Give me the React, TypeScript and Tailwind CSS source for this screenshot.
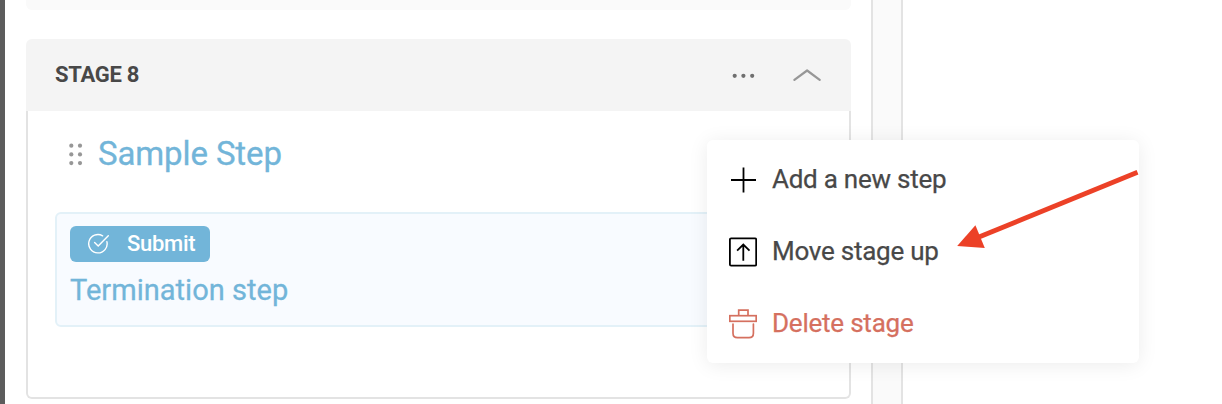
import type { ReactNode } from "react";

type MenuItemProps = {
  icon: ReactNode;
  label: string;
  danger?: boolean;
};

function DotsIcon() {
  return (
    <svg width="24" height="6" viewBox="0 0 24 6" fill="#6f6f6f">
      <circle cx="2.7" cy="2.8" r="2.1" />
      <circle cx="11.4" cy="2.8" r="2.1" />
      <circle cx="20.2" cy="2.8" r="2.1" />
    </svg>
  );
}

function ChevronUpIcon() {
  return (
    <svg width="28" height="14" viewBox="0 0 28 14" fill="none" stroke="#979797" strokeWidth="2.2">
      <path d="M1.4 11.8L14.1 2.5L26.7 11.8" strokeLinecap="round" strokeLinejoin="round" />
    </svg>
  );
}

function DragHandle() {
  return (
    <svg className="mt-0.5" width="14" height="24" viewBox="0 0 14 24" fill="#979797">
      {[2.7, 11.4, 20.1].map((y) => (
        <g key={y}>
          <circle cx="2.3" cy={y} r="2.1" />
          <circle cx="11" cy={y} r="2.1" />
        </g>
      ))}
    </svg>
  );
}

function CheckCircleIcon() {
  return (
    <svg width="22" height="22" viewBox="0 0 22 22" fill="none" stroke="#fff" strokeWidth="1.4" strokeLinecap="round">
      <path d="M14.6 2.8A9.2 9.2 0 1 0 18.9 8.7" />
      <path d="M6.6 9.5L10.2 13L20.3 2.8" />
    </svg>
  );
}

function PlusIcon() {
  return (
    <svg width="28" height="28" viewBox="0 0 28 28" fill="none" stroke="#000" strokeWidth="1.8">
      <path d="M14.5 1.5V26.5M2 14H27" />
    </svg>
  );
}

function MoveUpIcon() {
  return (
    <svg width="28" height="30" viewBox="0 0 28 30" fill="none" stroke="#000" strokeWidth="1.8">
      <rect x="0.9" y="1.4" width="26.3" height="27.2" rx="1.2" />
      <path d="M14.3 23.7V7.6M8.1 13.6L14.3 7.6L20.5 13.6" />
    </svg>
  );
}

function TrashIcon() {
  return (
    <svg width="28" height="30" viewBox="0 0 28 30" fill="none" stroke="#d5705f" strokeWidth="1.7">
      <rect x="0.8" y="6.7" width="26.4" height="5.6" />
      <path d="M9.7 6.7V1.2H19V6.7" />
      <path d="M4 15V24.2Q4 28.6 8.5 28.6H20Q24.4 28.6 24.4 24.2V15" strokeLinecap="round" />
    </svg>
  );
}

function MenuItem({ icon, label, danger }: MenuItemProps) {
  return (
    <button className="flex h-[72px] w-full items-center pl-[22px] text-left">
      <span className="mt-px flex w-[43px] shrink-0">{icon}</span>
      <span
        className={
          danger
            ? "text-[26px] leading-8 tracking-[-0.22px] text-[#d5705f] [-webkit-text-stroke:0.25px]"
            : "text-[26px] leading-8 tracking-[-0.25px] text-[#484848] [-webkit-text-stroke:0.25px]"
        }
      >
        {label}
      </span>
    </button>
  );
}

function StageMenu() {
  return (
    <div className="absolute left-[707px] top-[140px] h-[223px] w-[432px] rounded-md bg-white py-[3px] shadow-[0_2px_20px_rgba(0,0,0,0.08)]">
      <MenuItem icon={<PlusIcon />} label="Add a new step" />
      <MenuItem icon={<MoveUpIcon />} label="Move stage up" />
      <MenuItem icon={<TrashIcon />} label="Delete stage" danger />
    </div>
  );
}

export default function App() {
  return (
    <div className="relative flex h-[404px] w-[1222px] overflow-hidden bg-white font-['Roboto',sans-serif]">
      <div className="w-[5px] shrink-0 bg-[#5c5c5c]" />

      <main className="flex w-[866px] shrink-0 flex-col pl-[21px] pr-5">
        <div className="h-2.5 shrink-0 rounded-b-md bg-[#fafafa]" />

        <section className="mt-[29px] flex h-[360px] shrink-0 flex-col">
          <header className="flex h-[72px] shrink-0 items-center rounded-t-md bg-[#f4f4f4] pl-[29px] pr-[30px]">
            <h2 className="text-[22px] font-bold leading-7 tracking-[-0.28px] text-[#484848]">STAGE 8</h2>
            <button className="ml-auto mt-[1px]">
              <DotsIcon />
            </button>
            <button className="ml-[37px]">
              <ChevronUpIcon />
            </button>
          </header>

          <div className="flex-1 rounded-b-md border-2 border-t-0 border-[#e3e3e3] px-[27px]">
            <div className="flex h-[86px] items-center pl-[14px]">
              <DragHandle />
              <h3 className="ml-[15px] text-[33px] leading-10 tracking-[-0.12px] text-[#72b5d9] [-webkit-text-stroke:0.3px]">
                Sample Step
              </h3>
            </div>

            <div className="mt-[15px] h-[115px] rounded-md border-2 border-[#e3f1f8] bg-[#f8fbff] px-[13px] pt-3">
              <div className="flex h-9 w-[140px] items-center rounded-md bg-[#72b5d9] pl-[18px] text-white">
                <CheckCircleIcon />
                <span className="ml-[17px] text-[22px] font-medium leading-7 tracking-[-0.3px]">Submit</span>
              </div>
              <p className="mt-[10px] text-[29px] leading-9 tracking-[0.03px] text-[#72b5d9] [-webkit-text-stroke:0.3px]">
                Termination step
              </p>
            </div>
          </div>
        </section>
      </main>

      <div className="w-8 shrink-0 border-x-2 border-[#e3e3e3] bg-[#fafafa]" />

      <StageMenu />

      {/* callout arrow pointing at "Move stage up" */}
      <svg className="absolute left-[950px] top-[160px]" width="200" height="100" viewBox="0 0 200 100">
        <path d="M187.5 12.2L29 77" stroke="#ec4127" strokeWidth="4.8" />
        <path d="M7.2 86L25.4 65.2L34.8 88Z" fill="#ec4127" />
      </svg>
    </div>
  );
}
